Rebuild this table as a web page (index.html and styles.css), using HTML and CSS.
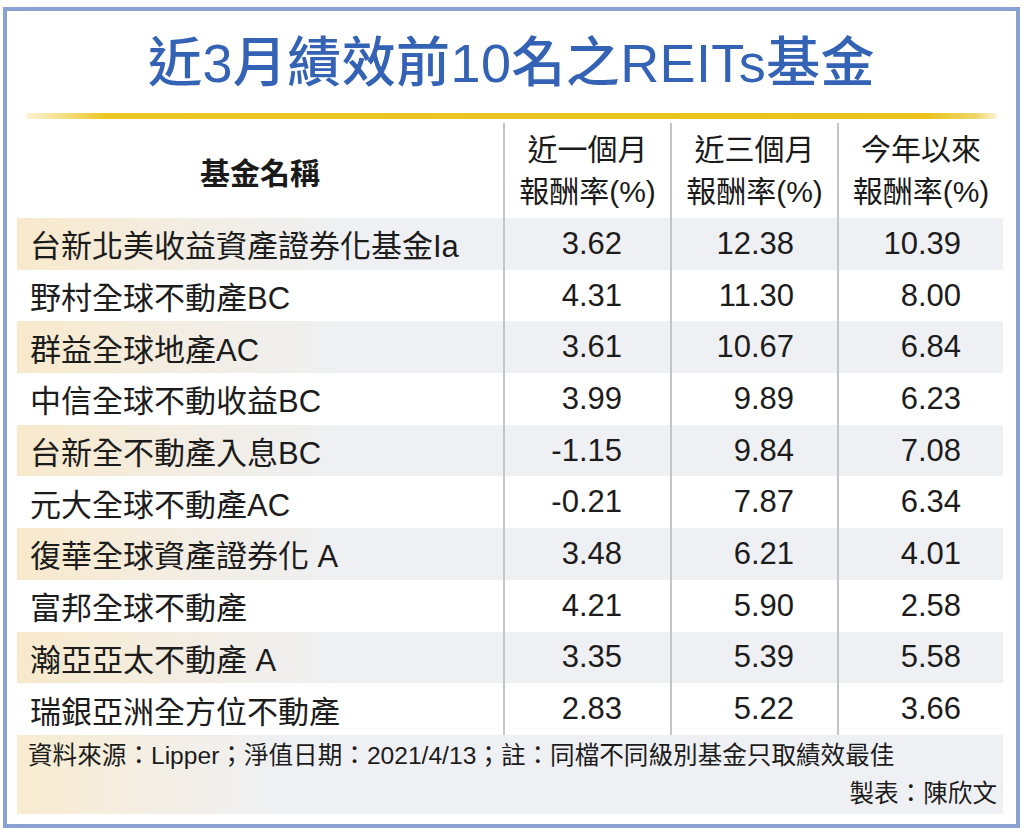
FILE: index.html
```html
<!DOCTYPE html>
<html lang="zh-Hant">
<head>
<meta charset="utf-8">
<title>近3月績效前10名之REITs基金</title>
<link rel="stylesheet" href="styles.css">
</head>
<body>
<div class="frame">
  <h1 class="title">近3月績效前10名之REITs基金</h1>
  <div class="goldline"></div>
  <div class="table">
    <div class="row head">
      <div class="cell name-h">基金名稱</div>
      <div class="cell col-h"><span>近一個月</span><span>報酬率(%)</span></div>
      <div class="cell col-h"><span>近三個月</span><span>報酬率(%)</span></div>
      <div class="cell col-h"><span>今年以來</span><span>報酬率(%)</span></div>
    </div>
    <div class="row shade">
      <div class="cell name">台新北美收益資產證券化基金Ia</div>
      <div class="cell num c2">3.62</div><div class="cell num c3">12.38</div><div class="cell num c4">10.39</div>
    </div>
    <div class="row">
      <div class="cell name">野村全球不動產BC</div>
      <div class="cell num c2">4.31</div><div class="cell num c3">11.30</div><div class="cell num c4">8.00</div>
    </div>
    <div class="row shade">
      <div class="cell name">群益全球地產AC</div>
      <div class="cell num c2">3.61</div><div class="cell num c3">10.67</div><div class="cell num c4">6.84</div>
    </div>
    <div class="row">
      <div class="cell name">中信全球不動收益BC</div>
      <div class="cell num c2">3.99</div><div class="cell num c3">9.89</div><div class="cell num c4">6.23</div>
    </div>
    <div class="row shade">
      <div class="cell name">台新全不動產入息BC</div>
      <div class="cell num c2">-1.15</div><div class="cell num c3">9.84</div><div class="cell num c4">7.08</div>
    </div>
    <div class="row">
      <div class="cell name">元大全球不動產AC</div>
      <div class="cell num c2">-0.21</div><div class="cell num c3">7.87</div><div class="cell num c4">6.34</div>
    </div>
    <div class="row shade">
      <div class="cell name">復華全球資產證券化 A</div>
      <div class="cell num c2">3.48</div><div class="cell num c3">6.21</div><div class="cell num c4">4.01</div>
    </div>
    <div class="row">
      <div class="cell name">富邦全球不動產</div>
      <div class="cell num c2">4.21</div><div class="cell num c3">5.90</div><div class="cell num c4">2.58</div>
    </div>
    <div class="row shade">
      <div class="cell name">瀚亞亞太不動產 A</div>
      <div class="cell num c2">3.35</div><div class="cell num c3">5.39</div><div class="cell num c4">5.58</div>
    </div>
    <div class="row">
      <div class="cell name">瑞銀亞洲全方位不動產</div>
      <div class="cell num c2">2.83</div><div class="cell num c3">5.22</div><div class="cell num c4">3.66</div>
    </div>
    <div class="foot">
      <div class="note">資料來源：Lipper；淨值日期：2021/4/13；註：同檔不同級別基金只取績效最佳</div>
      <div class="credit">製表：陳欣文</div>
    </div>
  </div>
</div>
</body>
</html>
```
FILE: styles.css
```css
html, body {
  margin: 0;
  padding: 0;
  background: #ffffff;
}
body {
  font-family: "Liberation Sans", "Noto Sans CJK TC", sans-serif;
  color: #1c1c1c;
}
.frame {
  margin: 7px 0 0 3px;
  width: 1009px;
  border: 4px solid #8aa2d2;
  padding-bottom: 10px;
  background: #ffffff;
}
.title {
  margin: 0;
  padding-top: 20px;
  height: 64px;
  line-height: 64px;
  font-size: 54px;
  font-weight: 500;
  text-align: center;
  color: #3463b5;
  letter-spacing: 0.4px;
}
.goldline {
  margin: 18px 0 0 19px;
  width: 971px;
  height: 6px;
  background: linear-gradient(to right, #fbf3d6 0, #ecc624 80px, #e9c31c 900px, #f0d66a 950px, #fbf3d6 971px);
}
.table {
  margin: 4px 0 0 10px;
  width: 986px;
}
.row {
  display: grid;
  grid-template-columns: 486px 167px 167px 166px;
  height: 51.7px;
}
.row.head {
  height: 95px;
}
.row.shade {
  background: linear-gradient(to right, #f8e9cb 0, #f3ede2 160px, #eff0f3 320px, #eff0f3 100%);
}
.cell {
  display: flex;
  align-items: center;
  font-size: 31px;
}
.cell + .cell {
  border-left: 2px solid #c4c4c6;
}
.name-h {
  justify-content: center;
  font-size: 30px;
  font-weight: bold;
  color: #1a1a1a;
}
.col-h {
  flex-direction: column;
  justify-content: center;
  font-size: 30px;
  line-height: 42px;
  color: #1a1a1a;
}
.name {
  padding-left: 13px;
}
.num {
  justify-content: flex-end;
}
.c2 { padding-right: 48px; }
.c3 { padding-right: 43px; }
.c4 { padding-right: 42px; }
.foot {
  height: 79px;
  padding: 2px 6px 0 11px;
  box-sizing: border-box;
  background: linear-gradient(to right, #f8ebd0 0, #f3efe6 150px, #eff0f3 260px, #eff0f3 100%);
  font-size: 24.6px;
  line-height: 38px;
  color: #1c1c1c;
}
.credit {
  text-align: right;
}
```
